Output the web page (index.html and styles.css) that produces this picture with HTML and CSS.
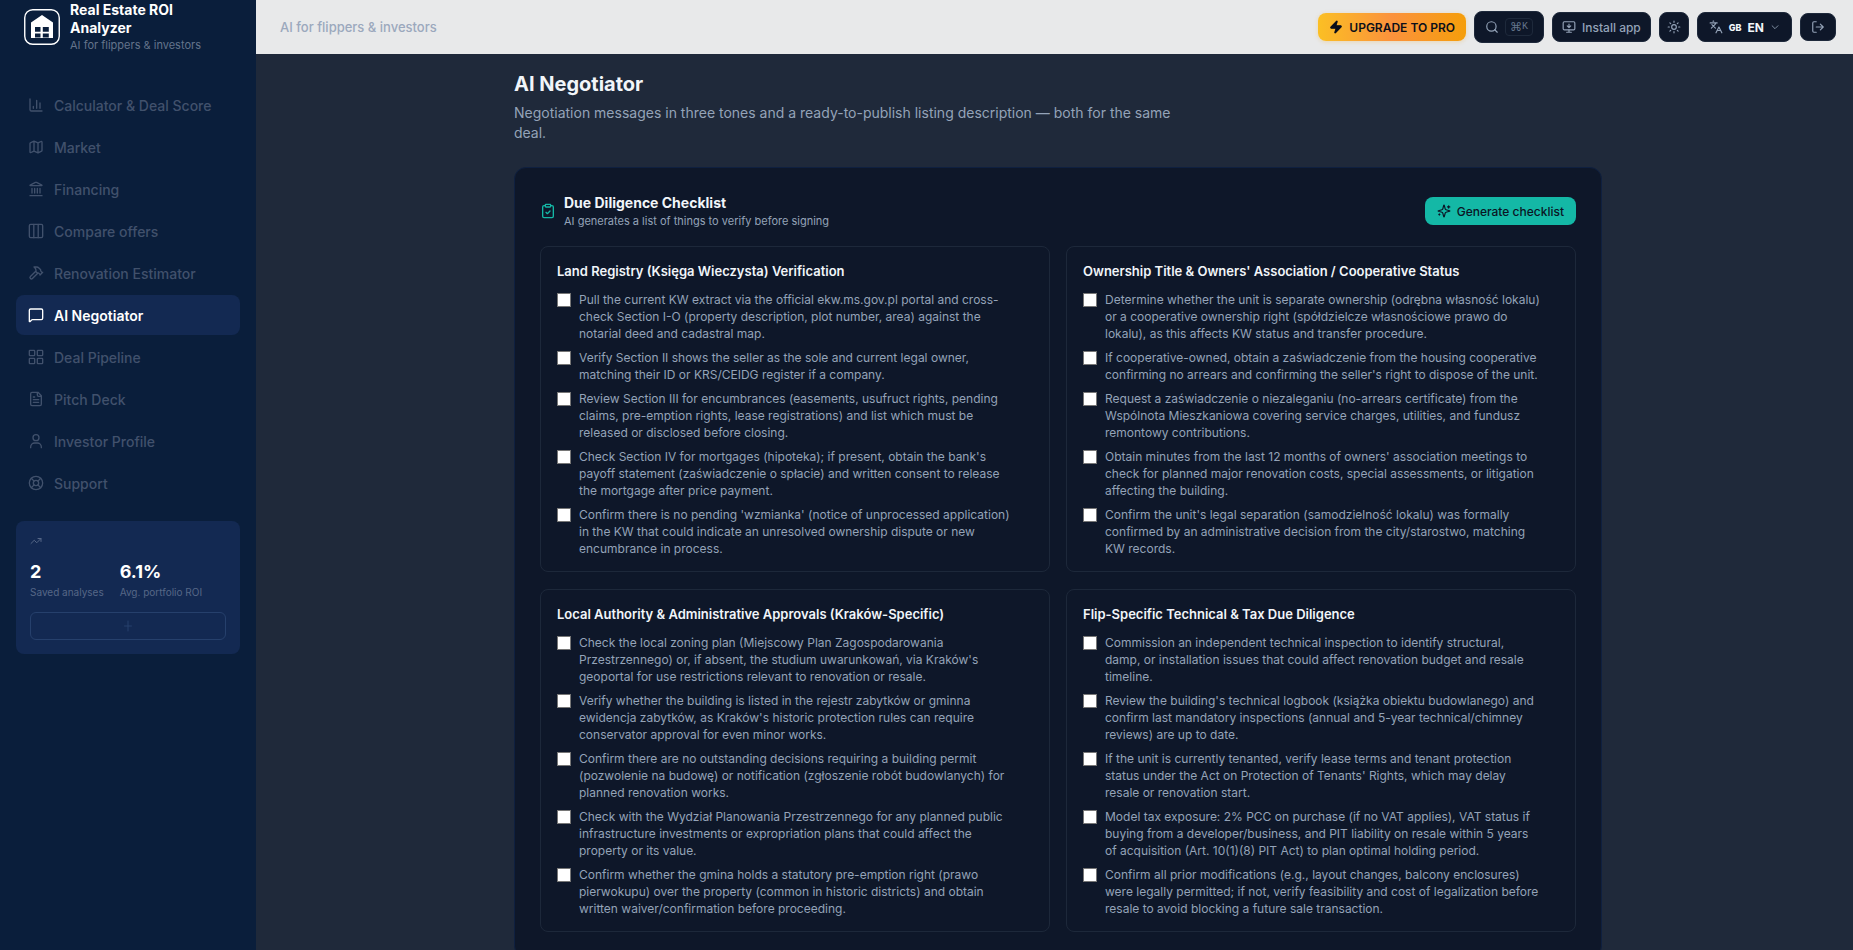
FILE: index.html
```html
<!DOCTYPE html>
<html lang="en">
<head>
<meta charset="utf-8">
<meta name="viewport" content="width=device-width, initial-scale=1">
<title>AI Negotiator – Real Estate ROI Analyzer</title>
<link rel="stylesheet" href="styles.css">
</head>
<body>
<div class="app">
  <aside class="sidebar">
    <div class="brand">
      <svg class="brand-logo" viewBox="0 0 36 36" aria-hidden="true">
        <rect x="0.75" y="0.75" width="34.5" height="34.5" rx="8" fill="none" stroke="#fff" stroke-width="1.4"/>
        <path fill="#fff" fill-rule="evenodd" d="M18 6 7 13.500v15.500h22V13.500zM11 18h5.500v4.700H11zM18.800 18h6v4.700h-6zM11 24.500h5.500v4H11zM18.800 24.500h6v4h-6z"/>
      </svg>
      <div class="brand-text">
        <div class="brand-name">Real Estate ROI Analyzer</div>
        <div class="brand-tag">AI for flippers &amp; investors</div>
      </div>
    </div>
    <nav class="nav" aria-label="Main">
      <a class="nav-item" href="#"><svg class="icon" viewBox="0 0 24 24"><path d="M3 3v16a2 2 0 0 0 2 2h16M8 17v-3M13 17V5M18 17V9"/></svg>Calculator &amp; Deal Score</a>
      <a class="nav-item" href="#"><svg class="icon" viewBox="0 0 24 24"><path d="M14.106 5.553a2 2 0 0 0 1.788 0l3.659-1.830A1 1 0 0 1 21 4.619v12.764a1 1 0 0 1-.553.894l-4.553 2.277a2 2 0 0 1-1.788 0l-4.212-2.106a2 2 0 0 0-1.788 0l-3.659 1.830A1 1 0 0 1 3 19.381V6.618a1 1 0 0 1 .553-.894l4.553-2.277a2 2 0 0 1 1.788 0zM15 5.764v15M9 3.236v15"/></svg>Market</a>
      <a class="nav-item" href="#"><svg class="icon" viewBox="0 0 24 24"><path d="M10 18v-7M11.120 2.198a2 2 0 0 1 1.760.006l7.866 3.847c.476.233.310.949-.220.949H3.474c-.530 0-.695-.716-.220-.949zM14 18v-7M18 18v-7M3 22h18M6 18v-7"/></svg>Financing</a>
      <a class="nav-item" href="#"><svg class="icon" viewBox="0 0 24 24"><rect x="2" y="2" width="20" height="20" rx="2"/><path d="M8.700 2v20M15.300 2v20"/></svg>Compare offers</a>
      <a class="nav-item" href="#"><svg class="icon" viewBox="0 0 24 24"><path d="m15 12-8.373 8.373a1 1 0 1 1-3-3L12 9M18 15l4-4M21.500 11.500l-1.914-1.914A2 2 0 0 1 19 8.172V7l-2.260-2.260a6 6 0 0 0-4.202-1.756L9 2.960l.920.820A6.180 6.180 0 0 1 12 8.400V10l2 2h1.172a2 2 0 0 1 1.414.586L18.500 14.500"/></svg>Renovation Estimator</a>
      <a class="nav-item nav-item-active" href="#" aria-current="page"><svg class="icon" viewBox="0 0 24 24"><path d="M22 17a2 2 0 0 1-2 2H6.828a2 2 0 0 0-1.414.586l-2.202 2.202A.710.710 0 0 1 2 21.286V5a2 2 0 0 1 2-2h16a2 2 0 0 1 2 2z"/></svg>AI Negotiator</a>
      <a class="nav-item" href="#"><svg class="icon" viewBox="0 0 24 24"><rect x="2" y="2" width="8" height="8" rx="1"/><rect x="14" y="2" width="8" height="8" rx="1"/><rect x="14" y="14" width="8" height="8" rx="1"/><rect x="2" y="14" width="8" height="8" rx="1"/></svg>Deal Pipeline</a>
      <a class="nav-item" href="#"><svg class="icon" viewBox="0 0 24 24"><path d="M15 2H6a2 2 0 0 0-2 2v16a2 2 0 0 0 2 2h12a2 2 0 0 0 2-2V7zM14 2v4a2 2 0 0 0 2 2h4M10 9H8M16 13H8M16 17H8"/></svg>Pitch Deck</a>
      <a class="nav-item" href="#"><svg class="icon" viewBox="0 0 24 24"><circle cx="12" cy="7" r="4.500"/><path d="M4 22v-1a6 6 0 0 1 6-6h4a6 6 0 0 1 6 6v1"/></svg>Investor Profile</a>
      <a class="nav-item" href="#"><svg class="icon" viewBox="0 0 24 24"><circle cx="12" cy="12" r="10"/><circle cx="12" cy="12" r="4"/><path d="m4.930 4.930 4.240 4.240M14.830 9.170l4.240-4.240M14.830 14.830l4.240 4.240M9.170 14.830l-4.240 4.240"/></svg>Support</a>
    </nav>
    <section class="stats" aria-label="Portfolio">
      <svg class="icon stats-icon" viewBox="0 0 24 24"><path d="M16 7h6v6M22 7l-8.500 8.500-5-5L2 17"/></svg>
      <dl class="stats-row">
        <div class="stat"><dd class="stat-value">2</dd><dt class="stat-label">Saved analyses</dt></div>
        <div class="stat"><dd class="stat-value">6.1%</dd><dt class="stat-label">Avg. portfolio ROI</dt></div>
      </dl>
      <button class="stats-add" type="button" aria-label="New analysis"><svg class="icon" viewBox="0 0 24 24"><path d="M5 12h14M12 2v20"/></svg></button>
    </section>
  </aside>

  <div class="page">
    <header class="topbar">
      <p class="topbar-title">AI for flippers &amp; investors</p>
      <div class="toolbar">
        <button class="upgrade" type="button"><svg class="icon icon-solid" viewBox="0 0 24 24"><path d="M4 14a1 1 0 0 1-.780-1.630l9.900-10.200a.500.500 0 0 1 .860.460l-1.920 6.020A1 1 0 0 0 13 10h7a1 1 0 0 1 .780 1.630l-9.900 10.200a.500.500 0 0 1-.860-.460l1.920-6.020A1 1 0 0 0 11 14z"/></svg>UPGRADE TO PRO</button>
        <button class="tool tool-search" type="button" aria-label="Search"><svg class="icon" viewBox="0 0 24 24"><circle cx="11" cy="11" r="8"/><path d="m21 21-4.300-4.300"/></svg><kbd class="kbd"><span class="kbd-mod">⌘</span>K</kbd></button>
        <button class="tool tool-install" type="button"><svg class="icon" viewBox="0 0 24 24"><path d="M12 13V7M15 10l-3 3-3-3M12 17v4M8 21h8"/><rect x="2" y="3" width="20" height="14" rx="2"/></svg>Install app</button>
        <button class="tool tool-theme" type="button" aria-label="Light theme"><svg class="icon" viewBox="0 0 24 24"><circle cx="12" cy="12" r="4"/><path d="M12 2v2M12 20v2M4.930 4.930l1.410 1.410M17.660 17.660l1.410 1.410M2 12h2M20 12h2M6.340 17.660l-1.410 1.410M19.070 4.930l-1.410 1.410"/></svg></button>
        <button class="tool tool-lang" type="button" aria-haspopup="listbox"><svg class="icon" viewBox="0 0 24 24"><path d="m5 8 6 6M4 14l6-6 2-3M2 5h12M7 2h1M22 22l-5-10-5 10M14 18h6"/></svg><span class="lang-flag">GB</span><span class="lang-code">EN</span><svg class="icon icon-chevron" viewBox="0 0 24 24"><path d="m5 9 7 7 7-7"/></svg></button>
        <button class="tool tool-exit" type="button" aria-label="Log out"><svg class="icon" viewBox="0 0 24 24"><path d="M9 21H5a2 2 0 0 1-2-2V5a2 2 0 0 1 2-2h4M16 17l5-5-5-5M21 12H9"/></svg></button>
      </div>
    </header>

    <main class="content">
      <div class="intro">
        <h1 class="title">AI Negotiator</h1>
        <p class="lead">Negotiation messages in three tones and a ready-to-publish listing description — both for the same deal.</p>
      </div>

      <section class="card" aria-labelledby="checklist-title">
        <div class="card-head">
          <svg class="icon card-icon" viewBox="0 0 24 24"><rect x="8" y="2" width="8" height="4" rx="1"/><path d="M16 4h2a2 2 0 0 1 2 2v14a2 2 0 0 1-2 2H6a2 2 0 0 1-2-2V6a2 2 0 0 1 2-2h2M9 14l2 2 4-4"/></svg>
          <div class="card-heading">
            <h2 class="card-title" id="checklist-title">Due Diligence Checklist</h2>
            <p class="card-sub">AI generates a list of things to verify before signing</p>
          </div>
          <button class="generate" type="button"><svg class="icon" viewBox="0 0 24 24"><path d="M9.937 15.500A2 2 0 0 0 8.500 14.063l-6.135-1.582a.500.500 0 0 1 0-.962L8.500 9.936A2 2 0 0 0 9.937 8.500l1.582-6.135a.500.500 0 0 1 .963 0L14.063 8.500A2 2 0 0 0 15.500 9.937l6.135 1.581a.500.500 0 0 1 0 .964L15.500 14.063a2 2 0 0 0-1.437 1.437l-1.582 6.135a.500.500 0 0 1-.963 0zM20 3v4M22 5h-4M4 17v2M5 18H3"/></svg>Generate checklist</button>
        </div>

        <div class="groups">
          <section class="group">
            <h3 class="group-title">Land Registry (Księga Wieczysta) Verification</h3>
            <label class="check"><input type="checkbox"><span>Pull the current KW extract via the official ekw.ms.gov.pl portal and cross-check Section I-O (property description, plot number, area) against the notarial deed and cadastral map.</span></label>
            <label class="check"><input type="checkbox"><span>Verify Section II shows the seller as the sole and current legal owner, matching their ID or KRS/CEIDG register if a company.</span></label>
            <label class="check"><input type="checkbox"><span>Review Section III for encumbrances (easements, usufruct rights, pending claims, pre-emption rights, lease registrations) and list which must be released or disclosed before closing.</span></label>
            <label class="check"><input type="checkbox"><span>Check Section IV for mortgages (hipoteka); if present, obtain the bank's payoff statement (zaświadczenie o spłacie) and written consent to release the mortgage after price payment.</span></label>
            <label class="check"><input type="checkbox"><span>Confirm there is no pending 'wzmianka' (notice of unprocessed application) in the KW that could indicate an unresolved ownership dispute or new encumbrance in process.</span></label>
          </section>
          <section class="group">
            <h3 class="group-title">Ownership Title &amp; Owners' Association / Cooperative Status</h3>
            <label class="check"><input type="checkbox"><span>Determine whether the unit is separate ownership (odrębna własność lokalu) or a cooperative ownership right (spółdzielcze własnościowe prawo do lokalu), as this affects KW status and transfer procedure.</span></label>
            <label class="check"><input type="checkbox"><span>If cooperative-owned, obtain a zaświadczenie from the housing cooperative confirming no arrears and confirming the seller's right to dispose of the unit.</span></label>
            <label class="check"><input type="checkbox"><span>Request a zaświadczenie o niezaleganiu (no-arrears certificate) from the Wspólnota Mieszkaniowa covering service charges, utilities, and fundusz remontowy contributions.</span></label>
            <label class="check"><input type="checkbox"><span>Obtain minutes from the last 12 months of owners' association meetings to check for planned major renovation costs, special assessments, or litigation affecting the building.</span></label>
            <label class="check"><input type="checkbox"><span>Confirm the unit's legal separation (samodzielność lokalu) was formally confirmed by an administrative decision from the city/starostwo, matching KW records.</span></label>
          </section>
          <section class="group">
            <h3 class="group-title">Local Authority &amp; Administrative Approvals (Kraków-Specific)</h3>
            <label class="check"><input type="checkbox"><span>Check the local zoning plan (Miejscowy Plan Zagospodarowania Przestrzennego) or, if absent, the studium uwarunkowań, via Kraków's geoportal for use restrictions relevant to renovation or resale.</span></label>
            <label class="check"><input type="checkbox"><span>Verify whether the building is listed in the rejestr zabytków or gminna ewidencja zabytków, as Kraków's historic protection rules can require conservator approval for even minor works.</span></label>
            <label class="check"><input type="checkbox"><span>Confirm there are no outstanding decisions requiring a building permit (pozwolenie na budowę) or notification (zgłoszenie robót budowlanych) for planned renovation works.</span></label>
            <label class="check"><input type="checkbox"><span>Check with the Wydział Planowania Przestrzennego for any planned public infrastructure investments or expropriation plans that could affect the property or its value.</span></label>
            <label class="check"><input type="checkbox"><span>Confirm whether the gmina holds a statutory pre-emption right (prawo pierwokupu) over the property (common in historic districts) and obtain written waiver/confirmation before proceeding.</span></label>
          </section>
          <section class="group">
            <h3 class="group-title">Flip-Specific Technical &amp; Tax Due Diligence</h3>
            <label class="check"><input type="checkbox"><span>Commission an independent technical inspection to identify structural, damp, or installation issues that could affect renovation budget and resale timeline.</span></label>
            <label class="check"><input type="checkbox"><span>Review the building's technical logbook (książka obiektu budowlanego) and confirm last mandatory inspections (annual and 5-year technical/chimney reviews) are up to date.</span></label>
            <label class="check"><input type="checkbox"><span>If the unit is currently tenanted, verify lease terms and tenant protection status under the Act on Protection of Tenants' Rights, which may delay resale or renovation start.</span></label>
            <label class="check"><input type="checkbox"><span>Model tax exposure: 2% PCC on purchase (if no VAT applies), VAT status if buying from a developer/business, and PIT liability on resale within 5 years of acquisition (Art. 10(1)(8) PIT Act) to plan optimal holding period.</span></label>
            <label class="check"><input type="checkbox"><span>Confirm all prior modifications (e.g., layout changes, balcony enclosures) were legally permitted; if not, verify feasibility and cost of legalization before resale to avoid blocking a future sale transaction.</span></label>
          </section>
        </div>
      </section>
    </main>
  </div>
</div>
</body>
</html>
```
FILE: styles.css
```css
:root {
  --navy: #0a1e3b;
  --panel: #132952;
  --slate: #1f293a;
  --ink: #0e1729;
  --line: #1d283a;
  --muted: #94a3b8;
  --dim: #41516c;
}

* { box-sizing: border-box; }

body {
  margin: 0;
  background: var(--slate);
  color: #f1f5f9;
  font-family: Inter, "Liberation Sans", sans-serif;
  font-size: 13px;
}

h1, h2, h3, p, dl, dd { margin: 0; }
button { font: inherit; cursor: pointer; }

.icon {
  width: 14px;
  height: 14px;
  flex: none;
  fill: none;
  stroke: currentColor;
  stroke-width: 2;
  stroke-linecap: round;
  stroke-linejoin: round;
}
.icon-solid { fill: currentColor; }

.app {
  display: flex;
  height: 100vh;
  overflow: hidden;
}

/* Sidebar */
.sidebar {
  width: 256px;
  flex: none;
  background: var(--navy);
}
.brand {
  display: flex;
  align-items: center;
  gap: 10px;
  height: 54px;
  padding: 0 24px;
}
.brand-logo { width: 36px; height: 36px; flex: none; }
.brand-name {
  color: #fff;
  font-size: 14px;
  line-height: 18px;
  font-weight: 700;
}
.brand-tag { color: #64748b; font-size: 11px; line-height: 16px; white-space: nowrap; }

.nav {
  display: flex;
  flex-direction: column;
  gap: 2px;
  padding: 31px 16px 18px;
}
.nav-item {
  display: flex;
  align-items: center;
  gap: 10px;
  height: 40px;
  padding: 0 12px;
  border-radius: 8px;
  color: var(--dim);
  font-size: 14px;
  font-weight: 500;
  text-decoration: none;
}
.nav-item .icon { width: 16px; height: 16px; }
.nav-item-active { background: var(--panel); color: #fff; font-weight: 600; }

.stats {
  margin: 0 16px;
  padding: 14px;
  border-radius: 8px;
  background: var(--panel);
}
.stats-icon { display: block; width: 12px; height: 12px; color: #566787; }
.stats-row { display: flex; gap: 16px; padding: 12px 0; }
.stat-value { color: #fff; font-size: 18px; line-height: 25px; font-weight: 700; }
.stat-label { color: #566787; font-size: 10px; line-height: 16px; }
.stats-add {
  display: flex;
  align-items: center;
  justify-content: center;
  width: 100%;
  height: 28px;
  padding: 0;
  border: 1px solid #26406c;
  border-radius: 6px;
  background: none;
  color: #26406c;
}
.stats-add .icon { width: 12px; height: 12px; }

/* Top bar */
.page {
  display: flex;
  flex-direction: column;
  flex: 1;
  min-width: 0;
}
.topbar {
  display: flex;
  align-items: center;
  justify-content: space-between;
  flex: none;
  height: 54px;
  padding: 0 17px 0 24px;
  background: #e8e9ea;
}
.topbar-title { color: #9ba8bd; font-weight: 500; }
.toolbar { display: flex; align-items: center; gap: 8px; }
.upgrade {
  display: flex;
  align-items: center;
  gap: 6px;
  height: 28px;
  padding: 0 11px;
  border: 0;
  border-radius: 8px;
  background: linear-gradient(90deg, #fbbf24, #fb923c 50%, #f59e0b);
  box-shadow: 0 1px 4px rgba(245, 158, 11, 0.25);
  color: #0b0f1a;
  font-size: 12px;
  font-weight: 600;
}
.tool {
  display: flex;
  align-items: center;
  justify-content: center;
  gap: 6px;
  height: 30px;
  padding: 0 9px;
  border: 1px solid #1e293b;
  border-radius: 8px;
  background: var(--ink);
  color: var(--muted);
  font-size: 12px;
  font-weight: 500;
}
.tool-search { height: 32px; padding: 0 10px; }
.kbd {
  display: flex;
  align-items: center;
  padding: 0 4px;
  border: 1px solid #1e293b;
  border-radius: 4px;
  color: #64748b;
  font-family: "Liberation Mono", monospace;
  font-size: 10px;
  line-height: 16px;
}
.kbd-mod { font-family: "DejaVu Sans", sans-serif; font-size: 12px; }
.tool-theme { width: 30px; padding: 0; }
.tool-lang { padding: 0 11px; }
.lang-flag { color: #f1f5f9; font-size: 9px; font-weight: 800; }
.lang-code { color: #f1f5f9; font-weight: 700; }
.icon-chevron { width: 10px; height: 10px; }
.tool-exit { width: 36px; height: 28px; padding: 0; }

/* Content */
.content {
  flex: 1;
  min-height: 0;
  overflow: hidden;
  padding: 16px 32px 32px 39px;
}
.intro, .card { max-width: 1088px; margin: 0 auto; }
.title { font-size: 20px; line-height: 28px; font-weight: 700; }
.lead {
  max-width: 672px;
  margin: 5px 0 24px;
  color: var(--muted);
  font-size: 14px;
  line-height: 20px;
}
.card {
  padding: 25px;
  border: 1px solid #0f2040;
  border-radius: 12px;
  background: var(--ink);
}
.card-head { display: flex; align-items: center; margin-bottom: 17px; }
.card-icon { width: 16px; height: 16px; margin-right: 8px; color: #14b8a6; }
.card-heading { flex: 1; }
.card-title { font-size: 14px; line-height: 20px; font-weight: 700; }
.card-sub { color: var(--muted); font-size: 11px; line-height: 16px; }
.generate {
  display: flex;
  align-items: center;
  gap: 6px;
  height: 28px;
  padding: 0 12px;
  border: 0;
  border-radius: 8px;
  background: #14b8a6;
  color: #0b1424;
  font-size: 12px;
  font-weight: 500;
}

.groups {
  display: grid;
  grid-template-columns: 1fr 1fr;
  gap: 17px 16px;
}
.group {
  display: flex;
  flex-direction: column;
  gap: 7px;
  padding: 16px 34px 14px 16px;
  border: 1px solid var(--line);
  border-radius: 8px;
}
.group-title {
  margin-bottom: 4px;
  font-size: 13px;
  line-height: 17px;
  font-weight: 600;
}
.check {
  display: flex;
  align-items: flex-start;
  gap: 8px;
  color: var(--muted);
  font-size: 12px;
  line-height: 17px;
}
.check input {
  appearance: none;
  flex: none;
  width: 14px;
  height: 14px;
  margin: 2px 0 0;
  border: 1px solid #767676;
  background: #fff;
}
.check input:checked { background: #14b8a6; }
```
